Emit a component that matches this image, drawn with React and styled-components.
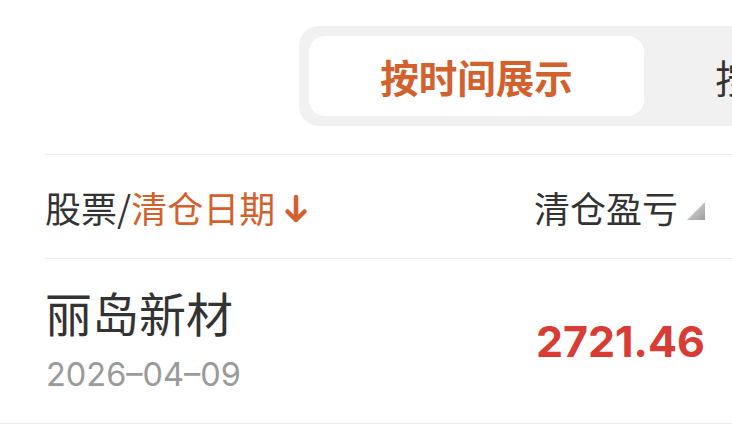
import React from "react";
import styled, { createGlobalStyle } from "styled-components";

const COLORS = {
  orange: "#d2612e",
  red: "#d73d35",
  text: "#333333",
  grey: "#9a9a9a",
  line: "#ececec",
  track: "#f1f1f1",
};

const GlobalStyle = createGlobalStyle`
  html, body {
    margin: 0;
    padding: 0;
    background: #ffffff;
    overflow: hidden;
  }
  body {
    width: 732px;
    height: 441px;
    font-family: "Noto Sans CJK SC", "Noto Sans", sans-serif;
    color: ${COLORS.text};
  }
`;

export default function App() {
  return (
    <>
      <GlobalStyle />
      <Page>
        <TabBar>
          <Segment>
            <Tab active>按时间展示</Tab>
            <Tab>按股票展示</Tab>
          </Segment>
        </TabBar>

        <HeaderRow>
          <HeaderLeft>
            股票/<Accent>清仓日期</Accent>
            <ArrowDown />
          </HeaderLeft>
          <HeaderRight>
            清仓盈亏
            <SortCorner />
          </HeaderRight>
        </HeaderRow>

        <StockRow>
          <StockInfo>
            <StockName>丽岛新材</StockName>
            <StockDate>2026–04–09</StockDate>
          </StockInfo>
          <Profit>2721.46</Profit>
        </StockRow>
      </Page>
    </>
  );
}

function ArrowDown() {
  return (
    <ArrowSvg width="24" height="30" viewBox="0 0 24 30">
      <path
        d="M12 3 V26 M3.5 17.5 L12 26 L20.5 17.5"
        fill="none"
        stroke={COLORS.orange}
        strokeWidth="4.5"
        strokeLinecap="round"
        strokeLinejoin="round"
      />
    </ArrowSvg>
  );
}

function SortCorner() {
  return (
    <CornerSvg width="18" height="18" viewBox="0 0 18 18">
      <defs>
        <linearGradient id="corner" x1="0" y1="0" x2="1" y2="1">
          <stop offset="0" stopColor="#e4e4e4" />
          <stop offset="1" stopColor="#9c9c9c" />
        </linearGradient>
      </defs>
      <polygon points="18,0 18,18 0,18" fill="url(#corner)" />
    </CornerSvg>
  );
}

const Page = styled.div`
  display: flex;
  flex-direction: column;
  width: 732px;
`;

const TabBar = styled.div`
  display: flex;
  padding: 26px 0 28px 299px;
  overflow: hidden;
`;

const Segment = styled.div`
  display: flex;
  flex-shrink: 0;
  padding: 10px;
  background: ${COLORS.track};
  border-radius: 20px;
`;

const Tab = styled.div`
  width: 335px;
  height: 80px;
  display: flex;
  align-items: center;
  justify-content: center;
  border-radius: 16px;
  font-size: 38.5px;
  font-weight: ${(p) => (p.active ? 700 : 400)};
  color: ${(p) => (p.active ? COLORS.orange : COLORS.text)};
  background: ${(p) => (p.active ? "#ffffff" : "transparent")};
`;

const Row = styled.div`
  display: flex;
  align-items: center;
  justify-content: space-between;
  margin-left: 45px;
  padding-right: 27px;
  border-top: 1px solid ${COLORS.line};
`;

const HeaderRow = styled(Row)`
  height: 103px;
`;

const HeaderLeft = styled.div`
  display: flex;
  align-items: center;
  font-size: 36px;
  color: ${COLORS.text};
`;

const Accent = styled.span`
  color: ${COLORS.orange};
`;

const ArrowSvg = styled.svg`
  margin-left: 9px;
  margin-top: 4px;
`;

const HeaderRight = styled.div`
  display: flex;
  align-items: center;
  font-size: 36px;
  color: ${COLORS.text};
`;

const CornerSvg = styled.svg`
  margin-left: 9px;
  margin-top: 8px;
`;

const StockRow = styled(Row)`
  height: 165px;
  margin-left: 0;
  padding-left: 45px;
  border-bottom: 1px solid ${COLORS.line};
  border-top: none;
  position: relative;

  &::before {
    content: "";
    position: absolute;
    top: 0;
    left: 45px;
    right: 0;
    border-top: 1px solid ${COLORS.line};
  }
`;

const StockInfo = styled.div`
  display: flex;
  flex-direction: column;
  padding-top: 2px;
`;

const StockName = styled.div`
  font-size: 47px;
  line-height: 50px;
  margin-bottom: 16px;
  color: ${COLORS.text};
`;

const StockDate = styled.div`
  font-family: "Inter", "Noto Sans", sans-serif;
  font-size: 32.5px;
  line-height: 44px;
  color: ${COLORS.grey};
  margin-left: 1px;
`;

const Profit = styled.div`
  font-family: "Inter", "Noto Sans", sans-serif;
  font-weight: 700;
  font-size: 43px;
  color: ${COLORS.red};
`;
